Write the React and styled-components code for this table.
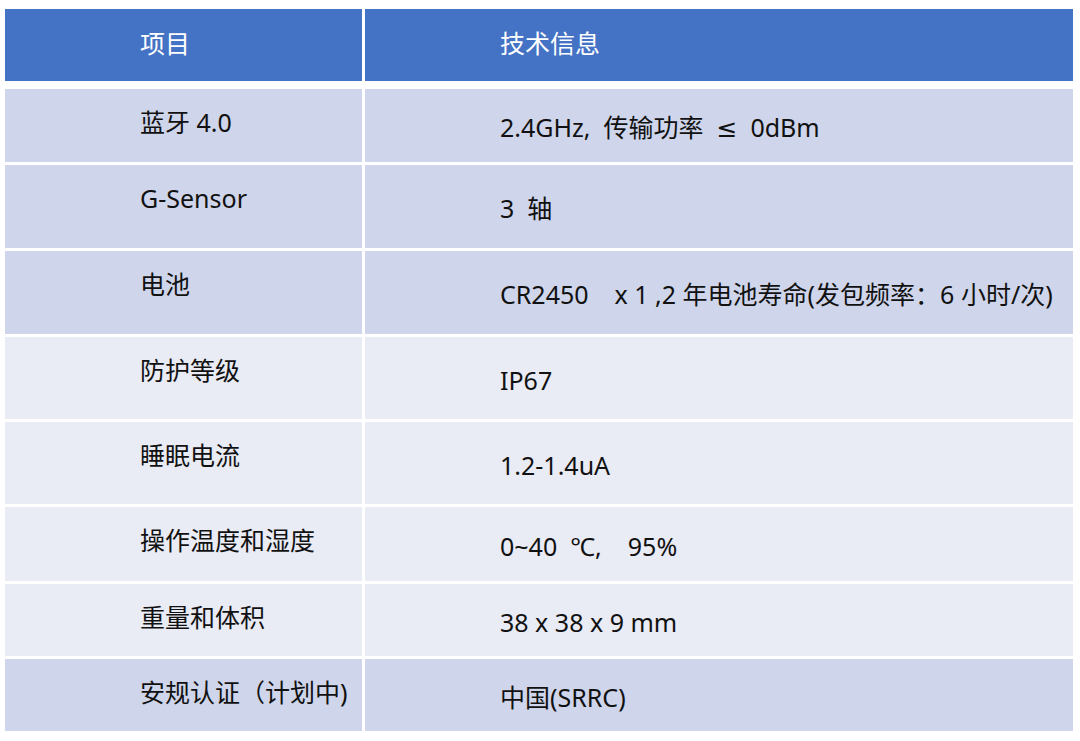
import React from "react";
import styled, { createGlobalStyle } from "styled-components";

const Global = createGlobalStyle`
  html, body { margin: 0; padding: 0; background: #ffffff; }
  body { font-family: "Noto Sans", "DejaVu Sans", "Noto Sans CJK SC", sans-serif; }
`;

const Page = styled.div`
  width: 1080px;
  height: 741px;
  box-sizing: border-box;
  padding: 9px 7px 0 5px;
  background: #ffffff;
`;

const Table = styled.div`
  display: flex;
  flex-direction: column;
  width: 1068px;
`;

const Body = styled.div`
  display: flex;
  flex-direction: column;
  gap: 3px;
  margin-top: 8px;
`;

const Row = styled.div`
  display: grid;
  grid-template-columns: 357px 1fr;
  column-gap: 3px;
  height: ${(p) => p.$h}px;
`;

const Cell = styled.div`
  display: flex;
  box-sizing: border-box;
  padding-left: 135px;
  background: ${(p) => p.$bg};
  color: ${(p) => (p.$head ? "#ffffff" : "#111111")};
  font-size: 25px;
  line-height: 34px;
  white-space: pre;
  align-items: ${(p) => (p.$top ? "flex-start" : "center")};
  padding-top: ${(p) => (p.$top ? 16 : p.$head ? 0 : 3)}px;
  padding-bottom: ${(p) => (p.$head ? 4 : 0)}px;
`;

const BLUE = "#4472c4";
const DARK = "#cfd5ea";
const LIGHT = "#e9ebf5";

const rows = [
  { k: "蓝牙 4.0", v: "2.4GHz,  传输功率  ≤  0dBm", h: 73, bg: DARK },
  { k: "G-Sensor", v: "3  轴", h: 83, bg: DARK },
  { k: "电池", v: "CR2450    x 1 ,2 年电池寿命(发包频率：6 小时/次)", h: 83, bg: DARK },
  { k: "防护等级", v: "IP67", h: 82, bg: LIGHT },
  { k: "睡眠电流", v: "1.2-1.4uA", h: 82, bg: LIGHT },
  { k: "操作温度和湿度", v: "0~40  ℃,    95%", h: 74, bg: LIGHT },
  { k: "重量和体积", v: "38 x 38 x 9 mm", h: 72, bg: LIGHT },
  { k: "安规认证（计划中)", v: "中国(SRRC)", h: 72, bg: DARK },
];

export default function App() {
  return (
    <Page>
      <Global />
      <Table>
        <Row $h={72}>
          <Cell $head $bg={BLUE}>项目</Cell>
          <Cell $head $bg={BLUE}>技术信息</Cell>
        </Row>
        <Body>
          {rows.map((r) => (
            <Row key={r.k} $h={r.h}>
              <Cell $top $bg={r.bg}>{r.k}</Cell>
              <Cell $bg={r.bg}>{r.v}</Cell>
            </Row>
          ))}
        </Body>
      </Table>
    </Page>
  );
}
